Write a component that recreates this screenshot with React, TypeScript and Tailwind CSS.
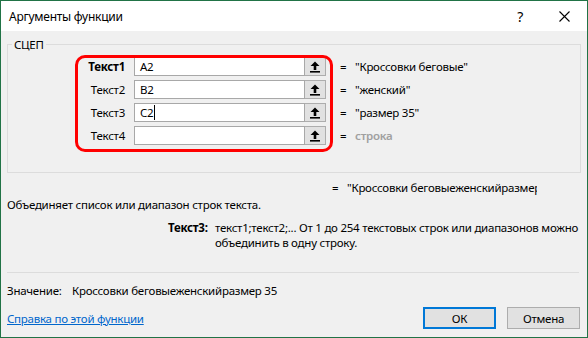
import React from "react";

const font = "font-['Segoe_UI','Noto_Sans','DejaVu_Sans',sans-serif]";

const args = [
  { label: "Текст1", value: "A2", result: "\"Кроссовки беговые\"", bold: true },
  { label: "Текст2", value: "B2", result: "\"женский\"" },
  { label: "Текст3", value: "C2", result: "\"размер 35\"", caret: true },
  { label: "Текст4", value: "", result: "строка", muted: true },
];

const RefArrow = () => (
  <svg width="10" height="12" viewBox="0 0 10 12">
    <path d="M5 0.5 L9.5 5 H6.3 V9 H3.7 V5 H0.5 Z" fill="#000" />
    <rect x="0" y="10" width="10" height="1.6" fill="#000" />
  </svg>
);

const ArgRow = ({
  label,
  value,
  result,
  bold,
  caret,
  muted,
}: {
  label: string;
  value: string;
  result: string;
  bold?: boolean;
  caret?: boolean;
  muted?: boolean;
}) => (
  <div className="flex items-center h-[19px] shrink-0">
    <div className={`w-[117px] text-right ${bold ? "font-bold" : ""} text-black`}>
      {label}
    </div>
    <div className="ml-[9px] w-[171px] h-[19px] bg-white border border-[#a8a8a8] flex items-center pl-[5px]">
      <span>{value}</span>
      {caret && <span className="w-px h-[15px] bg-black ml-[1px]" />}
    </div>
    <button className="w-[21px] h-[19px] bg-[#e1e1e1] border border-[#adadad] border-l-0 flex items-center justify-center">
      <RefArrow />
    </button>
    <span className="ml-[14px] w-[15px]">=</span>
    <span className={muted ? "text-[#a0a0a0] font-semibold" : "text-black"}>
      {result}
    </span>
  </div>
);

export default function App() {
  return (
    <div
      className={`w-[588px] h-[338px] border border-[#217346] bg-[#f0f0f0] flex flex-col text-[11.5px] tracking-[-0.25px] leading-[15px] text-black ${font}`}
    >
      {/* title bar */}
      <div className="h-[30px] bg-white flex items-center pl-[8px] pr-[17px]">
        <span className="text-[12px]">Аргументы функции</span>
        <span className="ml-auto mr-[36px] text-[14px]">?</span>
        <svg width="11" height="11" viewBox="0 0 11 11">
          <path d="M0.5 0.5 L10.5 10.5 M10.5 0.5 L0.5 10.5" stroke="#000" strokeWidth="1.1" />
        </svg>
      </div>

      <div className="px-[6px] flex flex-col">
        {/* group box */}
        <fieldset className="relative mt-[6px] h-[136px] border border-[#dcdcdc] pl-0 pt-[5px]">
          <legend className="ml-[4px] px-[2px]">СЦЕП</legend>
          <div className="flex flex-col gap-[4px]">
            {args.map((a) => (
              <ArgRow key={a.label} {...a} />
            ))}
          </div>
          <div className="absolute left-[67px] top-[3px] w-[258px] h-[97px] border-[3px] border-[#ff0000] rounded-[10px] pointer-events-none" />
        </fieldset>

        {/* combined result */}
        <div className="flex items-center mt-[7px] h-[15px]">
          <span className="ml-[325px] w-[15px]">=</span>
          <span className="w-[190px] overflow-hidden whitespace-nowrap">
            "Кроссовки беговыеженскийразмер 35"
          </span>
        </div>

        <div className="mt-[2px]">Объединяет список или диапазон строк текста.</div>

        <div className="flex mt-[8px]">
          <span className="ml-[161px] w-[47px] font-bold">Текст3:</span>
          <span className="w-[366px]">
            текст1;текст2;... От 1 до 254 текстовых строк или диапазонов можно
            объединить в одну строку.
          </span>
        </div>

        <div className="mt-[22px] h-px bg-[#dcdcdc] w-[572px]" />

        <div className="flex mt-[10px]">
          <span className="w-[65px]">Значение:</span>
          <span>Кроссовки беговыеженскийразмер 35</span>
        </div>

        <div className="flex items-center mt-[9px]">
          <a href="#" className="text-[#0066cc] underline">
            Справка по этой функции
          </a>
          <button className="ml-auto w-[73px] h-[22px] bg-[#e1e1e1] border-2 border-[#0078d7]">
            ОК
          </button>
          <button className="ml-[11px] mr-[1px] w-[73px] h-[22px] bg-[#e1e1e1] border border-[#adadad]">
            Отмена
          </button>
        </div>
      </div>
    </div>
  );
}
